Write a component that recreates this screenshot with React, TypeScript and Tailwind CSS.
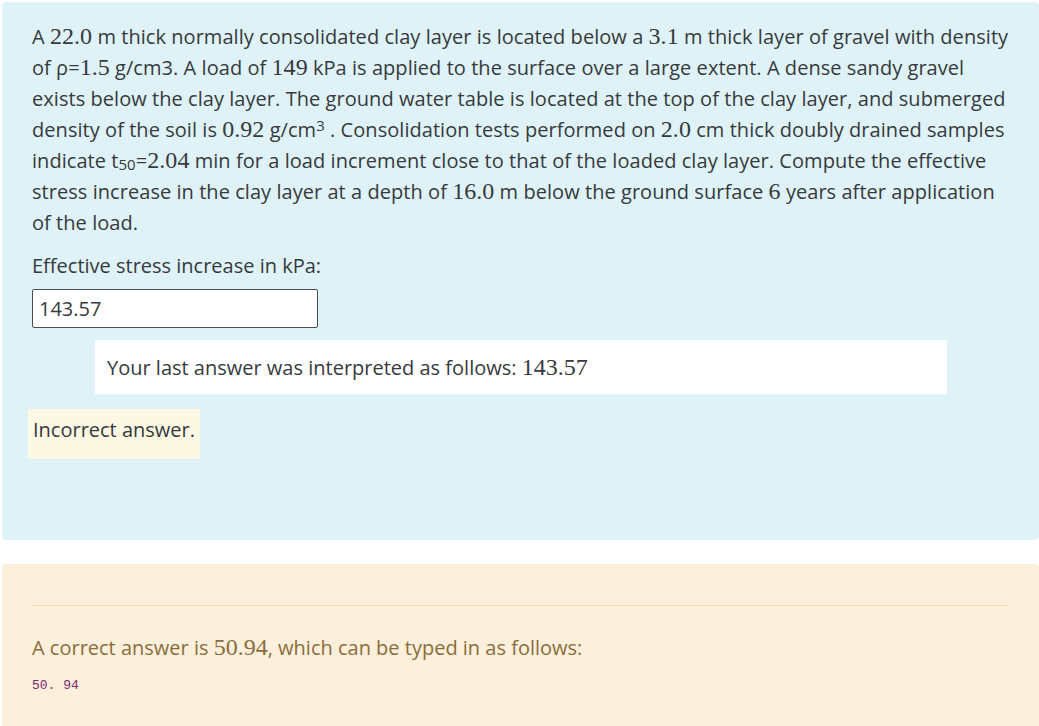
const sans = { fontFamily: '"Open Sans", "Noto Sans", sans-serif' };

function M({ children }: { children: React.ReactNode }) {
  // MathJax-ish number
  return <span className="font-['Liberation_Serif',serif] text-[24px] leading-none">{children}</span>;
}

export default function App() {
  return (
    <div className="min-h-[726px] bg-white text-[#373a3c] text-[20px] leading-[31px]" style={sans}>
      {/* Question */}
      <div className="ml-[2px] mt-[2px] w-[1037px] h-[538px] rounded-[4px] bg-[#def2f8] pl-[30px] pr-[4px] pt-[19px]">
        <p className="tracking-[0.05px] whitespace-nowrap">
          A <M>22.0</M> m thick normally consolidated clay layer is located below a <M>3.1</M> m thick layer of gravel with density
          <br />
          of ρ=<M>1.5</M> g/cm3. A load of <M>149</M> kPa is applied to the surface over a large extent. A dense sandy gravel
          <br />
          exists below the clay layer. The ground water table is located at the top of the clay layer, and submerged
          <br />
          density of the soil is <M>0.92</M> g/cm<sup className="text-[15px] leading-none relative -top-[6px]">3</sup> . Consolidation tests performed on <M>2.0</M> cm thick doubly drained samples
          <br />
          indicate t<sub className="text-[15px] leading-none relative top-[2px]">50</sub>=<M>2.04</M> min for a load increment close to that of the loaded clay layer. Compute the effective
          <br />
          stress increase in the clay layer at a depth of <M>16.0</M> m below the ground surface <M>6</M> years after application
          <br />
          of the load.
        </p>

        <p className="mt-[12px]">Effective stress increase in kPa:</p>

        <div className="mt-[8px] w-[286px] h-[39px] rounded-[2px] border border-[#4a4e52] bg-white px-[6px] flex items-center">
          143.57
        </div>

        <div className="mt-[12px] ml-[63px] w-[852px] h-[54px] bg-white px-[12px] flex items-center">
          Your last answer was interpreted as follows:&nbsp;<M>143.57</M>
        </div>

        <div className="mt-[15px] -ml-[4px] w-[172px] h-[50px] bg-[#fcf8e3] pl-[5px] pt-[5px]">
          Incorrect answer.
        </div>
      </div>

      {/* Right answer */}
      <div className="ml-[2px] mt-[24px] w-[1037px] h-[170px] rounded-t-[4px] bg-[#fcefdc] px-[30px] pt-[41px] text-[#8a6d3b]">
        <div className="h-px w-[976px] bg-[#f5d9b3]" />
        <p className="mt-[26px]">
          A correct answer is <M>50.94</M>, which can be typed in as follows:
        </p>
        <p className="mt-[7px] text-[13px] text-[#7b2a6e] font-['Liberation_Mono','DejaVu_Sans_Mono',monospace]">50. 94</p>
      </div>
    </div>
  );
}
